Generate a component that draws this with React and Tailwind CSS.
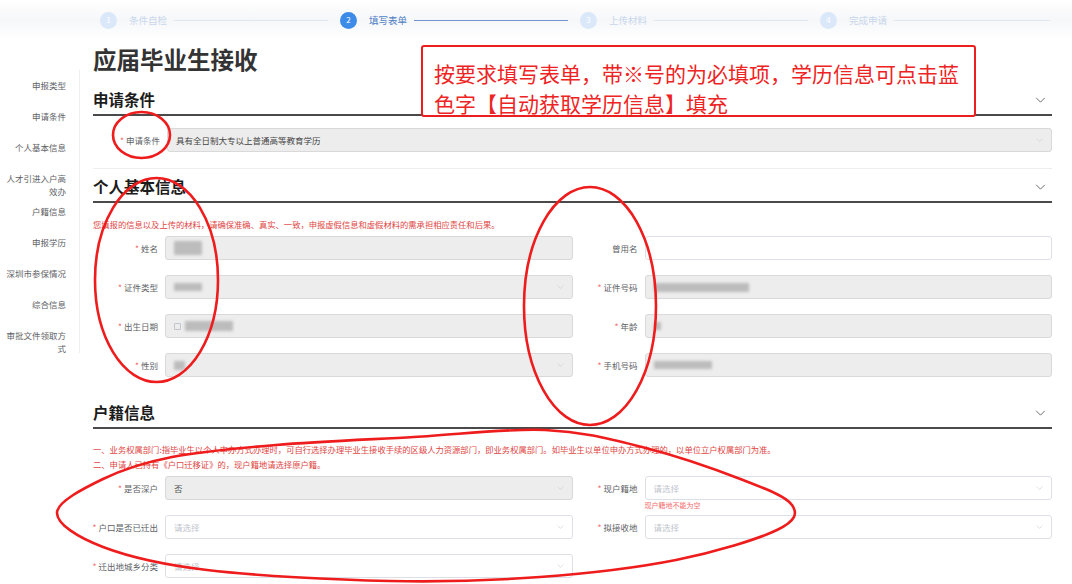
import React from "react";

const steps = [
  { n: 1, label: "条件自检", line: "w-[154px]" },
  { n: 2, label: "填写表单", line: "w-[154px]", active: true },
  { n: 3, label: "上传材料", line: "w-[154px]" },
  { n: 4, label: "完成申请", line: "w-[156px]" },
];

const sideNav = [
  ["申报类型"],
  ["申请条件"],
  ["个人基本信息"],
  ["人才引进入户高", "效办"],
  ["户籍信息"],
  ["申报学历"],
  ["深圳市参保情况"],
  ["综合信息"],
  ["审批文件领取方", "式"],
];

const ChevronDown = ({ className }) => (
  <svg viewBox="0 0 12 7" className={className} fill="none" stroke="currentColor" strokeWidth="1.1">
    <path d="M1 1l5 5 5-5" />
  </svg>
);

const SectionHeader = ({ title, className }) => (
  <div className={`flex items-center justify-between border-b-2 border-[#4a4a4a] ${className}`}>
    <h2 className="text-[15.5px] font-bold leading-none text-[#1c1c1c]">{title}</h2>
    <ChevronDown className="mr-[6px] h-[6px] w-[11px] text-[#666]" />
  </div>
);

const Box = ({ disabled, select, children }) => (
  <div
    className={`flex h-[24px] min-w-0 flex-1 items-center rounded-[3px] border pl-[8px] text-[8.5px] ${
      disabled ? "border-[#d9d9d9] bg-[#ededed] text-[#555]" : "border-[#dcdfe6] bg-white text-[#606266]"
    }`}
  >
    <div className="flex min-w-0 flex-1 items-center gap-[4px]">{children}</div>
    {select && <ChevronDown className="mr-[8px] h-[4px] w-[7px] shrink-0 text-[#c8cbd1]" />}
  </div>
);

const Field = ({ label, required, labelW = "w-[72px]", children, error }) => (
  <div className="flex items-center">
    <div className={`${labelW} flex shrink-0 justify-end whitespace-nowrap pr-[7px] text-[8.5px] text-[#606266]`}>
      {required && <span className="mr-[2px] text-[#f56c6c]">*</span>}
      {label}
    </div>
    <div className="relative flex min-w-0 flex-1">
      {children}
      {error && (
        <span className="absolute left-0 top-full mt-[2px] text-[7px] leading-none text-[#f56c6c]">{error}</span>
      )}
    </div>
  </div>
);

const Blur = ({ className }) => <span className={`block bg-[#bcbcbc] blur-[1.5px] ${className}`} />;

const Placeholder = () => <span className="text-[#c0c4cc]">请选择</span>;

export default function App() {
  return (
    <div className="relative h-[584px] w-[1072px] overflow-hidden bg-white font-['Noto_Sans_CJK_SC',sans-serif]">
      {/* stepper */}
      <div className="flex h-[40px] items-center bg-linear-to-b from-white via-[#f6f7f9] to-white pl-[100px]">
        {steps.map((s) => (
          <div key={s.n} className="flex items-center">
            <span
              className={`flex h-[17px] w-[17px] items-center justify-center rounded-full text-[8px] text-white ${
                s.active ? "bg-[#3d8be8]" : "bg-[#dbe8f9]"
              }`}
            >
              {s.n}
            </span>
            <span className={`ml-[12px] w-[38px] text-[9.5px] ${s.active ? "text-[#4f7fc4]" : "text-[#c9d7ec]"}`}>
              {s.label}
            </span>
            <span className={`ml-[7px] mr-[12px] h-px ${s.line} ${s.active ? "bg-[#6f95d2]" : "bg-[#dfe7f3]"}`} />
          </div>
        ))}
      </div>

      <div className="flex">
        {/* side nav */}
        <aside className="mt-[30px] w-[80px] shrink-0 self-start border-r border-[#f0f0f0] pr-[13px] text-right text-[8.5px] leading-[13px] text-[#606266]">
          {sideNav.map((lines, i) => (
            <div key={i} className={`pt-[8.5px] ${lines.length > 1 ? "h-[33px]" : "h-[31px]"}`}>
              {lines.map((l) => (
                <div key={l}>{l}</div>
              ))}
            </div>
          ))}
        </aside>

        {/* main */}
        <main className="ml-[13px] w-[959px]">
          <h1 className="flex h-[40px] items-center text-[23.5px] font-bold leading-none text-[#333]">应届毕业生接收</h1>

          <SectionHeader title="申请条件" className="h-[36px] pt-[6px]" />
          <div className="mt-[12px]">
            <Field label="申请条件" required labelW="w-[74px]">
              <Box disabled select>
                <span className="text-[#444]">具有全日制大专以上普通高等教育学历</span>
              </Box>
            </Field>
          </div>
          <div className="mt-[16px] border-t border-[#eeeeee]" />

          <SectionHeader title="个人基本信息" className="h-[34px] pt-[4px]" />
          <p className="mt-[15px] whitespace-nowrap text-[8.3px] leading-[12px] text-[#e0453f]">
            您填报的信息以及上传的材料，请确保准确、真实、一致，申报虚假信息和虚假材料的需承担相应责任和后果。
          </p>
          <div className="mt-[6px] grid grid-cols-2 gap-y-[15px]">
            <Field label="姓名" required>
              <Box disabled>
                <Blur className="h-[14px] w-[28px]" />
              </Box>
            </Field>
            <Field label="曾用名">
              <Box />
            </Field>
            <Field label="证件类型" required>
              <Box disabled select>
                <Blur className="h-[8px] w-[28px]" />
              </Box>
            </Field>
            <Field label="证件号码" required>
              <Box disabled>
                <Blur className="h-[9px] w-[95px]" />
              </Box>
            </Field>
            <Field label="出生日期" required>
              <Box disabled>
                <span className="block h-[7px] w-[7px] rounded-[1px] border border-[#c0c4cc]" />
                <Blur className="h-[10px] w-[48px]" />
              </Box>
            </Field>
            <Field label="年龄" required>
              <Box disabled>
                <Blur className="h-[8px] w-[7px]" />
              </Box>
            </Field>
            <Field label="性别" required>
              <Box disabled select>
                <Blur className="h-[9px] w-[11px]" />
              </Box>
            </Field>
            <Field label="手机号码" required>
              <Box disabled>
                <Blur className="h-[8px] w-[58px]" />
              </Box>
            </Field>
          </div>

          <SectionHeader title="户籍信息" className="mt-[16px] h-[36px] pt-[6px]" />
          <div className="mt-[13px] whitespace-nowrap text-[8.3px] leading-[15px] text-[#e0453f]">
            <p>
              一、业务权属部门:指毕业生以个人申办方式办理时，可自行选择办理毕业生接收手续的区级人力资源部门，即业务权属部门。如毕业生以单位申办方式办理的，以单位立户权属部门为准。
            </p>
            <p>二、申请人已持有《户口迁移证》的，现户籍地请选择原户籍。</p>
          </div>
          <div className="mt-[4px] grid grid-cols-2 gap-y-[15px]">
            <Field label="是否深户" required>
              <Box disabled select>
                <span className="text-[#555]">否</span>
              </Box>
            </Field>
            <Field label="现户籍地" required error="现户籍地不能为空">
              <Box select>
                <Placeholder />
              </Box>
            </Field>
            <Field label="户口是否已迁出" required>
              <Box select>
                <Placeholder />
              </Box>
            </Field>
            <Field label="拟接收地" required>
              <Box select>
                <Placeholder />
              </Box>
            </Field>
            <Field label="迁出地城乡分类" required>
              <Box select>
                <Placeholder />
              </Box>
            </Field>
          </div>
        </main>
      </div>

      {/* annotation callout */}
      <div className="absolute left-[421px] top-[45px] h-[72px] w-[555px] rounded-[3px] border-2 border-[#ec1f1f] bg-white pl-[11px] pt-[11px] text-[21px] leading-[30px] whitespace-nowrap text-[#ee2424]">
        按要求填写表单，带※号的为必填项，学历信息可点击蓝
        <br />
        色字【自动获取学历信息】填充
      </div>

      {/* hand-drawn ellipses */}
      <svg className="pointer-events-none absolute inset-0" width="1072" height="584" fill="none" stroke="#ee1c1c" strokeWidth="2.6">
        <ellipse cx="141.5" cy="135" rx="28.5" ry="23" />
        <ellipse cx="156.5" cy="280" rx="61.5" ry="102" />
        <ellipse cx="590" cy="306" rx="66" ry="119" />
        <path d="M57 513 C57 501.7 83.8 488.3 103 479 C122.2 469.7 143.2 462.7 172 457 C200.8 451.3 235.7 448.3 276 445 C316.3 441.7 369.2 439.5 414 437 C458.8 434.5 507 428.3 545 430 C583 431.7 609 438.7 642 447 C675 455.3 718 470.3 743 480 C768 489.7 786.3 496.7 792 505 C797.7 513.3 796.3 520.8 777 530 C757.7 539.2 715.5 552.2 676 560 C636.5 567.8 587.7 573.5 540 577 C492.3 580.5 445.5 582.2 390 581 C334.5 579.8 254.8 575.7 207 570 C159.2 564.3 128 556.5 103 547 C78 537.5 57 524.3 57 513 Z" />
      </svg>
    </div>
  );
}
